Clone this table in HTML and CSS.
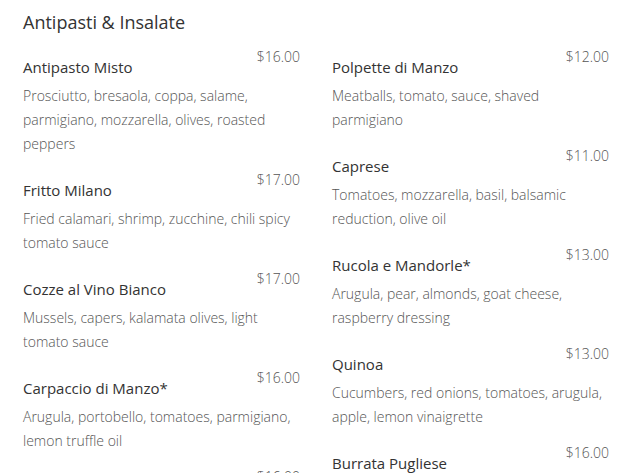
FILE: index.html
```html
<!DOCTYPE html>
<html lang="it">
<head>
<meta charset="utf-8">
<title>Antipasti &amp; Insalate</title>
<link rel="stylesheet" href="styles.css">
</head>
<body>
<section class="menu">
  <h2 class="menu-title">Antipasti &amp; Insalate</h2>
  <div class="menu-cols">
    <div class="menu-col">
      <div class="item">
        <h3 class="item-name">Antipasto Misto</h3>
        <span class="item-price">$16.00</span>
        <p class="item-desc">Prosciutto, bresaola, coppa, salame, parmigiano, mozzarella, olives, roasted peppers</p>
      </div>
      <div class="item">
        <h3 class="item-name">Fritto Milano</h3>
        <span class="item-price">$17.00</span>
        <p class="item-desc">Fried calamari, shrimp, zucchine, chili spicy tomato sauce</p>
      </div>
      <div class="item">
        <h3 class="item-name">Cozze al Vino Bianco</h3>
        <span class="item-price">$17.00</span>
        <p class="item-desc">Mussels, capers, kalamata olives, light tomato sauce</p>
      </div>
      <div class="item">
        <h3 class="item-name">Carpaccio di Manzo*</h3>
        <span class="item-price">$16.00</span>
        <p class="item-desc">Arugula, portobello, tomatoes, parmigiano, lemon truffle oil</p>
      </div>
      <div class="item">
        <h3 class="item-name">Bruschetta</h3>
        <span class="item-price">$16.00</span>
        <p class="item-desc">Grilled bread, tomatoes, garlic, basil</p>
      </div>
    </div>
    <div class="menu-col">
      <div class="item">
        <h3 class="item-name">Polpette di Manzo</h3>
        <span class="item-price">$12.00</span>
        <p class="item-desc">Meatballs, tomato, sauce, shaved parmigiano</p>
      </div>
      <div class="item">
        <h3 class="item-name">Caprese</h3>
        <span class="item-price">$11.00</span>
        <p class="item-desc">Tomatoes, mozzarella, basil, balsamic reduction, olive oil</p>
      </div>
      <div class="item">
        <h3 class="item-name">Rucola e Mandorle*</h3>
        <span class="item-price">$13.00</span>
        <p class="item-desc">Arugula, pear, almonds, goat cheese, raspberry dressing</p>
      </div>
      <div class="item">
        <h3 class="item-name">Quinoa</h3>
        <span class="item-price">$13.00</span>
        <p class="item-desc">Cucumbers, red onions, tomatoes, arugula, apple, lemon vinaigrette</p>
      </div>
      <div class="item">
        <h3 class="item-name">Burrata Pugliese</h3>
        <span class="item-price">$16.00</span>
        <p class="item-desc">Burrata, prosciutto, cherry tomatoes, basil</p>
      </div>
    </div>
  </div>
</section>
</body>
</html>
```
FILE: styles.css
```css
html, body {
  margin: 0;
  padding: 0;
  background: #ffffff;
}
body {
  font-family: "Open Sans", "DejaVu Sans", sans-serif;
  color: #333333;
  overflow: hidden;
}
.menu {
  padding: 8px 22px 0 23px;
}
.menu-title {
  margin: 0 0 9px 0;
  font-size: 18px;
  line-height: 28px;
  font-weight: 400;
  color: #333333;
}
.menu-cols {
  display: grid;
  grid-template-columns: 277px 277px;
  column-gap: 32px;
}
.menu-col {
  display: flex;
  flex-direction: column;
}
.item {
  display: grid;
  grid-template-columns: 1fr auto;
  align-items: start;
  margin-bottom: 12px;
}
.item-name {
  grid-column: 1;
  grid-row: 1;
  margin: 10px 0 0 0;
  font-size: 15px;
  line-height: 24px;
  font-weight: 400;
  color: #333333;
}
.item-price {
  grid-column: 2;
  grid-row: 1;
  font-size: 14px;
  line-height: 24px;
  font-weight: 300;
  color: #555555;
}
.item-desc {
  grid-column: 1 / 3;
  grid-row: 2;
  margin: 5px 0 0 0;
  font-size: 14px;
  line-height: 24px;
  font-weight: 300;
  color: #555555;
}
```
